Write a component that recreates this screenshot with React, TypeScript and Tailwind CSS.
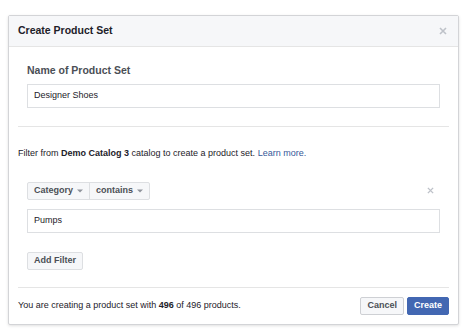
import React from "react";

const Caret = () => (
  <svg width="6" height="4" viewBox="0 0 6 4" className="ml-[4px] inline-block">
    <path d="M0 0.5 H6 L3 3.5 Z" fill="#90949c" />
  </svg>
);

const Close = ({ size = 8 }: { size?: number }) => (
  <svg width={size} height={size} viewBox="0 0 8 8">
    <path d="M1 1 L7 7 M7 1 L1 7" stroke="#bec2c9" strokeWidth="1.6" />
  </svg>
);

export default function App() {
  return (
    <div
      className="w-[466px] h-[334px] bg-white pt-[15px] pl-[8px]"
      style={{ fontFamily: '"Liberation Sans", Arial, sans-serif' }}
    >
      <div className="w-[451px] border border-[#d3d4d7] rounded-[2px] shadow-[0_1px_3px_rgba(0,0,0,0.12)] bg-white flex flex-col pb-[9px]">
        <div className="h-[31px] bg-[#f6f7f9] border-b border-[#e5e5e5] flex items-center justify-between pl-[9px] pr-[11px]">
          <span className="text-[10.5px] font-bold text-[#1d2129]">Create Product Set</span>
          <Close />
        </div>
        <div className="px-[18px] pt-[17px]">
          <div className="text-[10.5px] font-bold text-[#4b4f56] leading-[13px]">Name of Product Set</div>
          <div className="mt-[7px] h-[24px] border border-[#dddfe2] flex items-center px-[6px] text-[9px] text-[#1d2129]">
            Designer Shoes
          </div>
        </div>
        <div className="mx-[9px] mt-[18px] border-t border-[#e5e5e5]"></div>
        <div className="px-[9px] mt-[20px] text-[9px] leading-[12px] text-[#1d2129]">
          Filter from <span className="font-bold">Demo Catalog 3</span> catalog to create a product set.{" "}
          <span className="text-[#365899]">Learn more.</span>
        </div>
        <div className="px-[18px] mt-[23px]">
          <div className="flex items-center justify-between">
            <div className="flex h-[18px] border border-[#dddfe2] bg-[#f6f7f9] rounded-[2px] text-[9px] font-bold text-[#4b4f56]">
              <div className="flex items-center px-[6px] border-r border-[#dddfe2]">
                Category
                <Caret />
              </div>
              <div className="flex items-center px-[6px]">
                contains
                <Caret />
              </div>
            </div>
            <div className="mr-[6px] -mt-[2px]">
              <Close size={7} />
            </div>
          </div>
          <div className="mt-[9px] h-[24px] border border-[#dddfe2] flex items-center px-[6px] text-[9px] text-[#1d2129]">
            Pumps
          </div>
          <div className="mt-[19px] flex">
            <div className="flex items-center h-[18px] px-[6px] border border-[#dddfe2] bg-[#f6f7f9] rounded-[2px] text-[9px] font-bold text-[#4b4f56]">
              Add Filter
            </div>
          </div>
        </div>
        <div className="mx-[9px] mt-[17px] border-t border-[#e5e5e5]"></div>
        <div className="px-[9px] mt-[9px] flex items-center justify-between">
          <div className="text-[9px] text-[#1d2129]">
            You are creating a product set with <span className="font-bold">496</span> of 496 products.
          </div>
          <div className="flex gap-[3px]">
            <div className="h-[18px] px-[6px] flex items-center border border-[#ced0d4] bg-[#f6f7f9] rounded-[2px] text-[9px] font-bold text-[#4b4f56]">
              Cancel
            </div>
            <div className="h-[18px] px-[6px] flex items-center border border-[#4267b2] bg-[#4267b2] rounded-[2px] text-[9px] font-bold text-white">
              Create
            </div>
          </div>
        </div>
      </div>
    </div>
  );
}
